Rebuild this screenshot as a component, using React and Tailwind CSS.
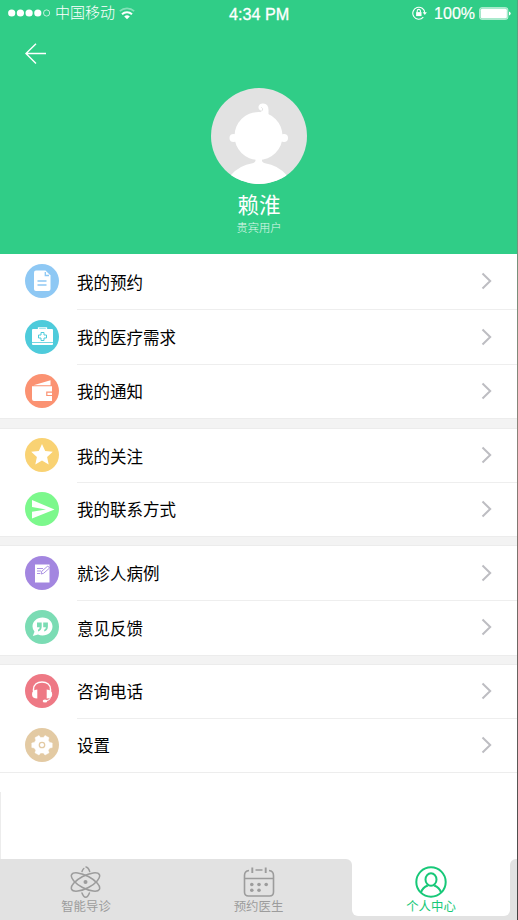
const FONT = "font-['Liberation_Sans','Noto_Sans_CJK_SC',sans-serif]";

const groups = [
  {
    gap: "",
    text: "pt-[2px]",
    rows: [
      { label: "我的预约", color: "bg-[#8ec8f4]", icon: DocIcon, height: "h-[56px]" },
      { label: "我的医疗需求", color: "bg-[#4ecbdb]", icon: KitIcon, height: "h-[55px]" },
      { label: "我的通知", color: "bg-[#fb9272]", icon: WalletIcon, height: "h-[53px]" },
    ],
  },
  {
    gap: "h-[11px]",
    text: "pt-[2px]",
    rows: [
      { label: "我的关注", color: "bg-[#f9d273]", icon: StarIcon, height: "h-[54px]" },
      { label: "我的联系方式", color: "bg-[#7cf88c]", icon: SendIcon, height: "h-[53px]" },
    ],
  },
  {
    gap: "h-[10px]",
    text: "pt-[2px]",
    rows: [
      { label: "就诊人病例", color: "bg-[#a386e0]", icon: NoteIcon, height: "h-[55px]" },
      { label: "意见反馈", color: "bg-[#7bdcb4]", icon: QuoteIcon, height: "h-[54px]" },
    ],
  },
  {
    gap: "h-[10px]",
    text: "pt-0",
    rows: [
      { label: "咨询电话", color: "bg-[#ee7985]", icon: HeadsetIcon, height: "h-[54px]" },
      { label: "设置", color: "bg-[#e3caa3]", icon: GearIcon, height: "h-[54px]" },
    ],
  },
];

export default function App() {
  return (
    <div className={`relative flex h-[920px] w-[518px] flex-col overflow-hidden bg-white ${FONT}`}>
      <header className="h-[254px] shrink-0 bg-[#30cd87] text-white">
        <StatusBar />
        <div className="pt-[17px] pl-6">
          <svg width="24" height="22" viewBox="0 0 24 22" fill="none" stroke="white" strokeWidth="1.4">
            <path d="M22 10.5H2M12 .8L2 10.5l10 10" />
          </svg>
        </div>
        <div className="mt-[23px] flex flex-col items-center">
          <Avatar />
          <div className="mt-[5px] text-[21.5px] leading-[34px]">赖淮</div>
          <div className="-mt-px text-[11.3px] leading-[12px] font-light text-white/85">贵宾用户</div>
        </div>
      </header>

      <main className="flex-1">
        {groups.map((group, i) => (
          <Group key={i} {...group} />
        ))}
        <div className="-mt-px h-px bg-[#ededed]" />
      </main>

      <TabBar />
      <div className="absolute top-0 right-0 h-full w-px bg-linear-to-b from-[#4fa57f] via-[#8b8078] to-[#444444]" />
      <div className="absolute top-[792px] left-0 h-[67px] w-px bg-[#ececec]" />
    </div>
  );
}

function StatusBar() {
  return (
    <div className="flex h-[26px] items-center pr-[7px] pl-2">
      <div className="flex w-[221px] items-center">
        <svg width="43" height="8" viewBox="0 0 43 8" fill="white">
          <circle cx="3.7" cy="4" r="3.6" />
          <circle cx="12.4" cy="4" r="3.6" />
          <circle cx="21.1" cy="4" r="3.6" />
          <circle cx="29.8" cy="4" r="3.6" />
          <circle cx="38.6" cy="4" r="3.1" fill="none" stroke="white" strokeWidth=".7" />
        </svg>
        <span className="ml-[4px] text-[15px] leading-[26px] font-light">中国移动</span>
        <svg className="ml-1" width="16" height="13" viewBox="0 0 16 13" fill="none" stroke="white" strokeWidth="2">
          <path d="M.8 4.2a10.5 10.5 0 0 1 14.4 0" strokeOpacity=".4" strokeWidth="1.6" />
          <path d="M3 7.2a7.3 7.3 0 0 1 10 0" />
          <path d="M8 12.3L5.2 9.5a4 4 0 0 1 5.6 0z" fill="white" stroke="none" />
        </svg>
      </div>
      <span className="w-[62px] pt-[3px] text-[16.2px] leading-[23px] whitespace-nowrap [-webkit-text-stroke:0.3px_white]">
        4:34 PM
      </span>
      <div className="ml-auto flex items-center">
        <svg width="15" height="14" viewBox="0 0 15 14" fill="none" stroke="white" strokeWidth="1.1">
          <path d="M11.3 11.2A6 6 0 1 1 12.8 7" />
          <path d="M10.7 6.3h4.2l-2.1 2.6z" fill="white" stroke="none" />
          <rect x="4.1" y="6.1" width="5.4" height="4" fill="white" stroke="none" />
          <path d="M5.2 6.3V5a1.6 1.6 0 0 1 3.2 0v1.3" />
        </svg>
        <span className="ml-[7px] pt-[2px] text-[16px] leading-[24px] [-webkit-text-stroke:0.2px_white]">100%</span>
        <svg className="ml-[4px]" width="32" height="13" viewBox="0 0 32 13" fill="white">
          <rect x=".5" y=".5" width="28.5" height="12" rx="2.5" fillOpacity=".45" stroke="white" strokeOpacity=".6" strokeWidth=".8" />
          <rect x="1.8" y="1.8" width="26" height="9.4" rx="1.5" />
          <path d="M30 4.4q1.7.6 1.7 2.1T30 8.6z" />
        </svg>
      </div>
    </div>
  );
}

function Avatar() {
  return (
    <svg width="96" height="96" viewBox="0 0 96 96">
      <defs>
        <clipPath id="avatar">
          <circle cx="48" cy="48" r="48" />
        </clipPath>
      </defs>
      <g clipPath="url(#avatar)" fill="white">
        <rect width="96" height="96" fill="#e2e2e2" />
        <circle cx="47.5" cy="48" r="24" />
        <circle cx="22.5" cy="50" r="4" />
        <circle cx="73" cy="50" r="4" />
        <path d="M46 25q4-.5 5.500-2.500-3.500.3-4-2.800c-.3-2.700 2-4.200 4.800-4.200q5.200.3 5.200 6.500V29z" />
        <path d="M50.300 19.300q2 .9 1.200 3.200" fill="none" stroke="#e2e2e2" strokeWidth="1" />
        <path d="M44.500 71h6.500q-.7 3.500 3 4.200 13 2 21.500 11.800V97H20V87q8.500-9.800 21.500-11.800 3.700-.7 3-4.200z" />
      </g>
    </svg>
  );
}

function Group({ gap, text, rows }) {
  return (
    <section>
      {gap && <div className={`border-y border-[#ececec] bg-[#f3f3f3] ${gap}`} />}
      {rows.map((row, i) => (
        <Row key={row.label} {...row} text={text} divider={i < rows.length - 1} />
      ))}
    </section>
  );
}

function Row({ label, color, icon: Icon, height, text, divider }) {
  return (
    <div className={`flex items-center pl-[25px] ${height}`}>
      <div className={`mb-[2px] flex h-[34px] w-[34px] items-center justify-center rounded-full ${color}`}>
        <Icon />
      </div>
      <div
        className={`ml-[18px] flex h-full flex-1 items-center justify-between border-b pr-[25px] ${
          divider ? "border-[#eeeeee]" : "border-transparent"
        }`}
      >
        <span className={`text-[16.5px] leading-6 text-black ${text}`}>{label}</span>
        <svg className="mb-px" width="12" height="18" viewBox="0 0 12 18" fill="none" stroke="#bdbdc2" strokeWidth="2">
          <path d="M1.500 1.500L9.200 9l-7.700 7.500" />
        </svg>
      </div>
    </div>
  );
}

function TabBar() {
  return (
    <nav className="flex h-[61px] shrink-0 bg-[#e2e2e2]">
      <Tab label="智能导诊" icon={<AtomIcon />} className="w-[172px] text-[#9c9c9c]" />
      <Tab label="预约医生" icon={<CalendarIcon />} className="w-[173px] text-[#9c9c9c]" />
      <div className="h-[57px] w-[7px] bg-white">
        <div className="h-full rounded-tr-[6px] bg-[#e2e2e2]" />
      </div>
      <Tab label="个人中心" icon={<UserIcon />} className="w-[158px] rounded-b-[6px] bg-white text-[#17c878]" />
      <div className="h-[57px] w-[8px] bg-white">
        <div className="h-full rounded-tl-[6px] bg-[#e2e2e2]" />
      </div>
    </nav>
  );
}

function Tab({ label, icon, className }) {
  return (
    <div className={`flex h-[57px] flex-col items-center pt-[7px] ${className}`}>
      {icon}
      <span className="mt-px text-[12.4px] leading-[17px]">{label}</span>
    </div>
  );
}

function DocIcon() {
  return (
    <svg width="34" height="34" viewBox="0 0 34 34">
      <path d="M11 6.500h9.500l5 5V25q0 2-2 2H11q-2 0-2-2V8.500q0-2 2-2z" fill="white" />
      <path d="M20.300 8v3.500h3.700M12.500 17h9M12.500 21h9" fill="none" stroke="#8ec8f4" strokeWidth="1.300" />
    </svg>
  );
}

function KitIcon() {
  return (
    <svg width="34" height="34" viewBox="0 0 34 34" fill="none" stroke="#4ecbdb">
      <path d="M13.500 9.500V7.800h8v1.700" stroke="white" strokeWidth="1.300" />
      <rect x="7" y="9" width="21" height="16" rx="1" fill="white" stroke="none" />
      <path d="M7 22.500h21" strokeWidth=".8" />
      <path d="M16 12.500h3V15h2.500v3H19v2.500h-3V18h-2.500v-3H16z" strokeWidth="1" />
    </svg>
  );
}

function WalletIcon() {
  return (
    <svg width="34" height="34" viewBox="0 0 34 34">
      <path d="M8.500 11.200L25.500 6.200v5z" fill="white" />
      <path d="M7 12.200h20V27H9q-2 0-2-2z" fill="white" />
      <path d="M27 18.200h-5.200v3.300H27" fill="none" stroke="#fb9272" strokeWidth="1.200" />
    </svg>
  );
}

function StarIcon() {
  return (
    <svg width="34" height="34" viewBox="0 0 34 34">
      <path d="M17 6l3.200 7 7.600.8-5.700 5.100 1.600 7.500L17 22.600l-6.700 3.800 1.600-7.500-5.700-5.100 7.600-.8z" fill="white" />
    </svg>
  );
}

function SendIcon() {
  return (
    <svg width="34" height="34" viewBox="0 0 34 34">
      <path d="M7 8l22.500 9.500L7 26.500v-6.800l14-2.200-14-2.500z" fill="white" />
    </svg>
  );
}

function NoteIcon() {
  return (
    <svg width="34" height="34" viewBox="0 0 34 34" fill="none" stroke="#a386e0" strokeWidth=".9">
      <rect x="10" y="8.500" width="14.500" height="18" fill="white" stroke="none" />
      <path d="M12 12.500h6M12 15h4M12 17.500h3" />
      <path d="M16 18l.8-2.800 6-5.200 1.800 2-6 5.300z" fill="white" />
    </svg>
  );
}

function QuoteIcon() {
  return (
    <svg width="34" height="34" viewBox="0 0 34 34">
      <path d="M17.500 7.500c5.800 0 10 4 10 9s-4.200 9-10 9q-2.500 0-4.500-.9L7.800 26l1.700-4.200q-2-2.200-2-5.300c0-5 4.200-9 10-9z" fill="white" />
      <path d="M12 12.500h4.700v4q0 4-3.700 5v-1.700q1.700-.8 1.700-2.600H12zM18.200 12.500h4.700v4q0 4-3.700 5v-1.700q1.700-.8 1.700-2.600h-2.700z" fill="#7bdcb4" />
    </svg>
  );
}

function HeadsetIcon() {
  return (
    <svg width="34" height="34" viewBox="0 0 34 34" fill="none" stroke="white">
      <path d="M8.500 17v-1.500C8.500 10.500 12.500 8 17 8s8.500 2.500 8.500 7.500V17" strokeWidth="1.500" />
      <path d="M12.300 15.500v9q-5.300 0-5.300-4.300t5.300-4.700zM21.700 15.500v9q5.500 0 5.500-4.300t-5.500-4.700z" fill="white" stroke="none" />
      <path d="M25.500 23.500q-.5 3-4.500 3.300" strokeWidth="1" />
      <ellipse cx="20" cy="27" rx="2.300" ry="1.500" fill="white" stroke="none" />
    </svg>
  );
}

function GearIcon() {
  return (
    <svg width="34" height="34" viewBox="0 0 34 34">
      <path
        d="M14 7.500l1.500 2h3l1.500-2 4 2.200-.8 2.500 1.500 2.300 2.500.5v4.500l-2.500.5-1.500 2.300.8 2.500-4 2.200-1.500-2h-3l-1.500 2-4-2.200.8-2.500L9.300 20l-2.500-.5V15l2.500-.5 1.500-2.300-.8-2.500z"
        fill="white"
        stroke="white"
        strokeWidth=".5"
        strokeLinejoin="round"
      />
      <circle cx="17" cy="17" r="2.700" fill="none" stroke="#e3caa3" strokeWidth="1.300" />
    </svg>
  );
}

function AtomIcon() {
  return (
    <svg width="32" height="32" viewBox="0 0 32 32" fill="none" stroke="currentColor" strokeWidth="1.500" strokeLinecap="round">
      <ellipse cx="15.500" cy="16" rx="15.700" ry="6.200" transform="rotate(28 15.500 16)" />
      <ellipse cx="15.500" cy="16" rx="15.700" ry="6.200" transform="rotate(-28 15.500 16)" />
      <path d="M12 5.500q.7-2 1.800-3M16 .9q2.500.5 3.700 4.600M12 27q1.500 4.200 3.700 4.200t3.700-4.200" />
      <circle cx="15.500" cy="16" r="2" fill="currentColor" stroke="none" />
    </svg>
  );
}

function CalendarIcon() {
  return (
    <svg width="32" height="32" viewBox="0 0 32 32" fill="none" stroke="currentColor" strokeWidth="1.600">
      <path d="M6 4.500q-4.500.5-4.500 5V26q0 4 4 4h21q4 0 4-4V9.500q0-4.500-4.500-5M12.500 4h7M1.500 12.500h29" />
      <path d="M9.300 1.500V7M22.700 1.500V7" strokeWidth="1.900" />
      <g fill="currentColor" stroke="none">
        <circle cx="8.800" cy="18.500" r="1.800" />
        <circle cx="16" cy="18.500" r="1.800" />
        <circle cx="23.200" cy="18.500" r="1.800" />
        <circle cx="8.800" cy="24.300" r="1.800" />
        <circle cx="16" cy="24.300" r="1.800" />
      </g>
    </svg>
  );
}

function UserIcon() {
  return (
    <svg width="32" height="32" viewBox="0 0 32 32" fill="none" stroke="currentColor" strokeWidth="2">
      <circle cx="16" cy="16" r="14.700" />
      <ellipse cx="16" cy="13.500" rx="5.500" ry="6.300" />
      <path d="M6 26.500q1.500-5 6.800-7M26 26.500q-1.500-5-6.800-7" />
    </svg>
  );
}
